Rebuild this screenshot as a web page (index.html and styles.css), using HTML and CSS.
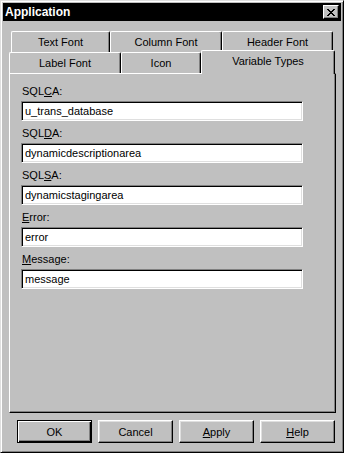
FILE: index.html
```html
<!DOCTYPE html>
<html lang="en">
<head>
  <meta charset="UTF-8">
  <title>Application</title>
  <link rel="stylesheet" href="styles.css">
</head>
<body>
  <div class="window">
    <div class="titlebar">
      <span class="title">Application</span>
      <button class="close" type="button">
        <svg width="8" height="7" viewBox="0 0 8 7"><path d="M0 0h2v1h1v1h2V1h1V0h2v1H7v1H6v1H5v1h1v1h1v1h1v1H6V6H5V5H3v1H2v1H0V6h1V5h1V4h1V3H2V2H1V1H0z" fill="#000"/></svg>
      </button>
    </div>

    <div class="content">
      <div class="tabs">
        <div class="tab-row back">
          <div class="tab w-text">Text Font</div>
          <div class="tab w-column">Column Font</div>
          <div class="tab w-header">Header Font</div>
        </div>
        <div class="tab-row front">
          <div class="tab w-label">Label Font</div>
          <div class="tab w-icon">Icon</div>
          <div class="tab w-vars active">Variable Types</div>
        </div>
      </div>

      <div class="panel">
        <div class="field">
          <label>SQL<u>C</u>A:</label>
          <input type="text" value="u_trans_database">
        </div>
        <div class="field">
          <label>SQL<u>D</u>A:</label>
          <input type="text" value="dynamicdescriptionarea">
        </div>
        <div class="field">
          <label>SQL<u>S</u>A:</label>
          <input type="text" value="dynamicstagingarea">
        </div>
        <div class="field">
          <label><u>E</u>rror:</label>
          <input type="text" value="error">
        </div>
        <div class="field">
          <label><u>M</u>essage:</label>
          <input type="text" value="message">
        </div>
      </div>

      <div class="buttons">
        <button class="btn default" type="button">OK</button>
        <button class="btn" type="button">Cancel</button>
        <button class="btn" type="button"><u>A</u>pply</button>
        <button class="btn" type="button"><u>H</u>elp</button>
      </div>
    </div>
  </div>
</body>
</html>
```

FILE: styles.css
```css
* {
  box-sizing: border-box;
}
body {
  margin: 0;
  background: #c0c0c0;
  font-family: "Liberation Sans", Arial, sans-serif;
  font-size: 11px;
  color: #000;
}
.window {
  width: 344px;
  height: 453px;
  padding: 2px;
  background: #c0c0c0;
  border: 1px solid;
  border-color: #dfdfdf #000 #000 #dfdfdf;
  box-shadow: inset 1px 1px #fff, inset -1px -1px #808080;
}
.titlebar {
  height: 18px;
  background: #000;
  display: flex;
  align-items: center;
  justify-content: space-between;
  padding: 0 2px;
}
.title {
  color: #fff;
  font-weight: bold;
  font-size: 12px;
}
.close {
  width: 16px;
  height: 14px;
  padding: 0;
  display: flex;
  align-items: center;
  justify-content: center;
  background: #c0c0c0;
  border: 1px solid;
  border-color: #fff #000 #000 #fff;
  box-shadow: inset -1px -1px #808080;
}
.content {
  padding: 10px 5px 0 6px;
}

/* tabs */
.tab-row {
  display: flex;
  align-items: flex-start;
  height: 21px;
}
.tab-row.back {
  padding-left: 2px;
}
.tab {
  height: 21px;
  padding-top: 4px;
  text-align: center;
  background: #c0c0c0;
  border-top: 1px solid #fff;
  border-left: 1px solid #fff;
  border-right: 1px solid #000;
  border-radius: 2px 2px 0 0;
  box-shadow: inset -1px 0 #808080;
}
.tab.active {
  height: 24px;
  margin-top: -2px;
  padding-top: 4px;
  position: relative;
  z-index: 1;
}
.w-text { width: 99px; }
.w-column { width: 112px; }
.w-header { width: 111px; }
.w-label { width: 112px; }
.w-icon { width: 80px; }
.w-vars { width: 134px; }

/* panel */
.panel {
  height: 340px;
  padding: 10px 0 0 11px;
  border: 1px solid;
  border-color: #fff #000 #000 #fff;
  box-shadow: inset -1px -1px #808080;
}
.field label {
  display: block;
  line-height: 14px;
  margin-bottom: 3px;
  padding-left: 1px;
}
.field input {
  display: block;
  width: 282px;
  height: 20px;
  margin: 0 0 5px 0;
  padding: 0 3px;
  font: inherit;
  color: #000;
  background: #fff;
  border: 1px solid;
  border-color: #808080 #fff #fff #808080;
  box-shadow: inset 1px 1px #000, inset -1px -1px #dfdfdf;
  outline: none;
}

/* buttons */
.buttons {
  display: flex;
  gap: 6px;
  margin: 7px 0 0 8px;
}
.btn {
  width: 75px;
  height: 23px;
  padding: 0;
  font: inherit;
  color: #000;
  background: #c0c0c0;
  border: 1px solid;
  border-color: #fff #000 #000 #fff;
  box-shadow: inset -1px -1px #808080, inset 1px 1px #dfdfdf;
}
.btn.default {
  border-color: #000;
  box-shadow: inset 1px 1px #fff, inset -1px -1px #000, inset -2px -2px #808080;
}
```
